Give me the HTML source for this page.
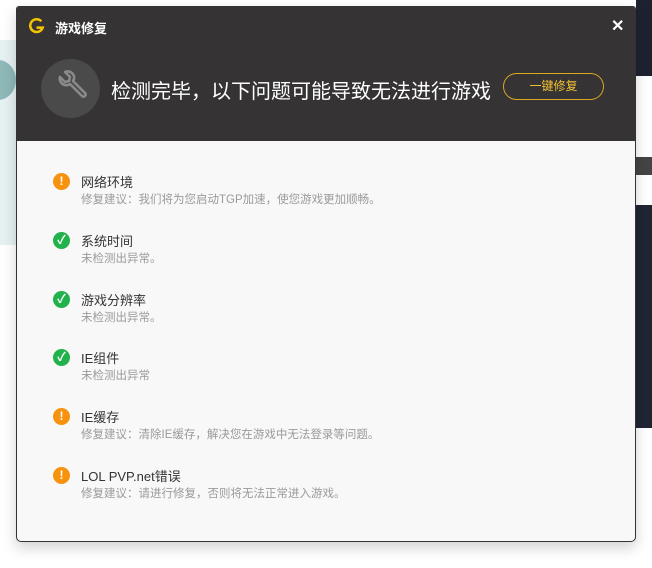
<!DOCTYPE html>
<html><head><meta charset="utf-8"><style>
*{margin:0;padding:0;box-sizing:border-box}
body{width:652px;height:568px;position:relative;background:#fff;font-family:"Liberation Sans","Noto Sans CJK SC",sans-serif;overflow:hidden}
.dlg{position:absolute;left:16px;top:6px;width:620px;height:536px;border:1px solid #333;border-radius:3px 3px 5px 5px;background:#f8f8f8;box-shadow:0 6px 14px rgba(0,0,0,.18);overflow:hidden}
.hd{position:absolute;left:0;top:0;width:100%;height:134px;background:#353334}
.ttl{position:absolute;left:38px;top:11px;color:#fff;font-size:13px;font-weight:bold}
.x{position:absolute;left:594px;top:9px;color:#fff;font-size:16px;font-weight:bold}
.circ{position:absolute;left:24px;top:52px;width:59px;height:59px;border-radius:50%;background:#4b4a4b}
.main{position:absolute;left:94px;top:68px;color:#fff;font-size:20px}
.btn{position:absolute;left:486px;top:66px;width:101px;height:27px;border:1.5px solid #d9a922;border-radius:14px;color:#f2c033;font-size:12px;text-align:center;line-height:24px}
.row{position:absolute;left:36px}
.ic{position:absolute;left:0;top:1px;width:17px;height:17px;border-radius:50%;color:#fff;font-size:12px;font-weight:bold;text-align:center;line-height:17px}
.o{background:#f7920f}.g{background:#21b24b}
.t{position:absolute;left:28px;top:0;font-size:13px;color:#333;white-space:nowrap}
.s{position:absolute;left:28px;top:19px;font-size:11.5px;color:#9a9a9a;white-space:nowrap}
</style></head><body>
<div style="position:absolute;left:0;top:40px;width:16px;height:205px;background:#e6f1f1"></div>
<div style="position:absolute;left:-20px;top:60px;width:36px;height:40px;border-radius:50%;background:#8fb8b8"></div>
<div style="position:absolute;left:636px;top:0;width:16px;height:76px;background:#1e2230"></div>
<div style="position:absolute;left:636px;top:157px;width:16px;height:18px;background:#444"></div>
<div style="position:absolute;left:636px;top:205px;width:16px;height:223px;background:#1f2533"></div>
<div class="dlg">
<div class="hd">
<svg style="position:absolute;left:11px;top:10px" width="17" height="17" viewBox="0 0 16 16"><path d="M12.5 4A6 6 0 1 0 13.8 10H8" fill="none" stroke="#f5c400" stroke-width="2.4"/></svg>
<div class="ttl">游戏修复</div>
<div class="x">✕</div>
<div class="circ"><svg width="59" height="59" viewBox="0 0 59 59"><path d="M19 18l5 5 4-1 1-4-5-5c5-2 10 2 9 7l-1 2 12 12c2 2-1 5-3 3L29 25l-2 1c-6 1-9-4-8-8z" fill="none" stroke="#8a8a8a" stroke-width="2.6" stroke-linejoin="round"/></svg></div>
<div class="main">检测完毕，以下问题可能导致无法进行游戏</div>
<div class="btn">一键修复</div>
</div>
<div class="row" style="top:165px"><div class="ic o">!</div><div class="t">网络环境</div><div class="s">修复建议：我们将为您启动TGP加速，使您游戏更加顺畅。</div></div>
<div class="row" style="top:224px"><div class="ic g">✓</div><div class="t">系统时间</div><div class="s">未检测出异常。</div></div>
<div class="row" style="top:283px"><div class="ic g">✓</div><div class="t">游戏分辨率</div><div class="s">未检测出异常。</div></div>
<div class="row" style="top:341px"><div class="ic g">✓</div><div class="t">IE组件</div><div class="s">未检测出异常</div></div>
<div class="row" style="top:400px"><div class="ic o">!</div><div class="t">IE缓存</div><div class="s">修复建议：清除IE缓存，解决您在游戏中无法登录等问题。</div></div>
<div class="row" style="top:459px"><div class="ic o">!</div><div class="t">LOL PVP.net错误</div><div class="s">修复建议：请进行修复，否则将无法正常进入游戏。</div></div>
</div>
</body></html>
